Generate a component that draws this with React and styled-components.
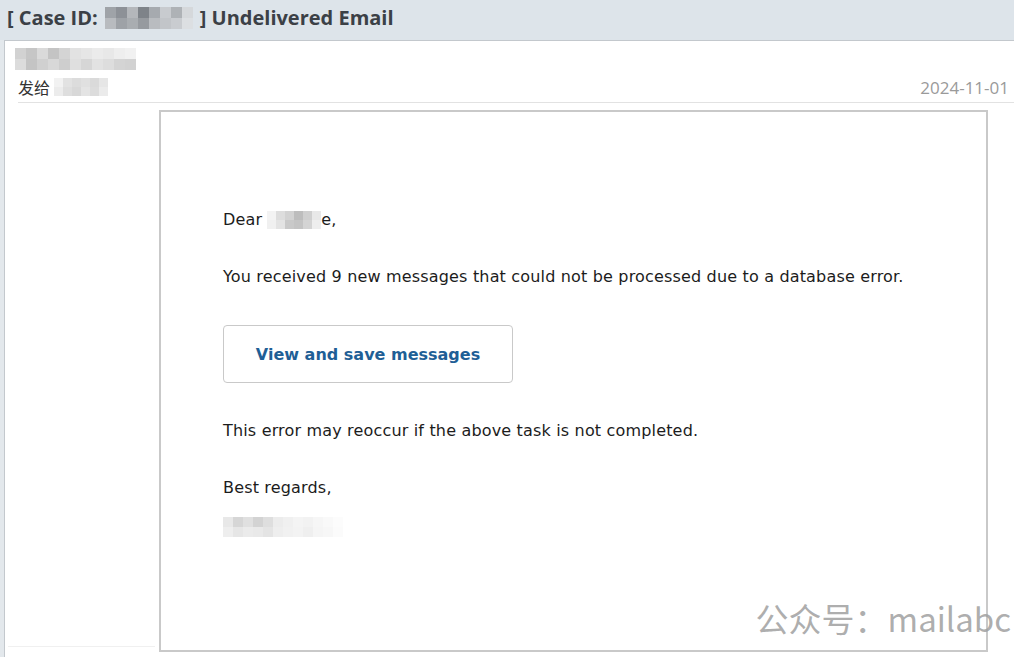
import styled, { createGlobalStyle } from 'styled-components';

const GlobalStyle = createGlobalStyle`
  html, body {
    margin: 0;
    padding: 0;
    background: #e3e8ec;
    overflow: hidden;
  }
`

// pixelated blur used where the screenshot had names masked
function Masked({ rows, cell = 12 }) {
  return (
    <MaskBox>
      {rows.map((row, r) =>
        <MaskRow key={r}>
          {row.map((c, i) => <MaskCell key={i} $size={cell} $color={c} />)}
        </MaskRow>
      )}
    </MaskBox>
  )
}

function App() {
  return (
    <Page>
      <GlobalStyle />
      <TitleBar>
        <Title>
          [ Case ID:
          <InlineMask>
            <Masked cell={11} rows={[
              ['#9fa3a8', '#8d9197', '#b4b7bb', '#7e8389', '#a6aaaf', '#c8cbcf', '#aeb2b6', '#d5d8db'],
              ['#b8bbbf', '#9ea2a7', '#a9adb1', '#969a9f', '#b9bcc0', '#c2c5c9', '#c9ccd0', '#dcdfe2'],
            ]} />
          </InlineMask>
          ] Undelivered Email
        </Title>
      </TitleBar>
      <Panel>
        <Meta>
          <SenderRow>
            <Masked cell={11} rows={[
              ['#d2d2d2', '#c6c6c6', '#dadada', '#c4c4c4', '#d4d4d4', '#e2e2e2', '#e6e6e6', '#ebebeb', '#e8e8e8', '#eeeeee', '#f1f1f1'],
              ['#dcdcdc', '#c4c4c4', '#d0d0d0', '#d8d8d8', '#cecece', '#dfdfdf', '#d6d6d6', '#e2e2e2', '#dddddd', '#d4d4d4', '#d2d2d2'],
            ]} />
          </SenderRow>
          <ToRow>
            <ToLabel>
              发给
              <Masked cell={9} rows={[
                ['#f2f2f2', '#e2e2e2', '#dcdcdc', '#e0e0e0', '#dadada', '#e6e6e6'],
                ['#ececec', '#dedede', '#d8d8d8', '#e4e4e4', '#dcdcdc', '#ebebeb'],
              ]} />
            </ToLabel>
            <DateText>2024-11-01</DateText>
          </ToRow>
        </Meta>
        <BodyArea>
          <Gutter />
          <MailFrame>
            <Line>
              Dear
              <Masked cell={9} rows={[
                ['#f3f3f3', '#dddddd', '#d2d2d2', '#bdbdbd', '#cfcfcf', '#e8e8e8'],
                ['#f0f0f0', '#e3e3e3', '#c9c9c9', '#c4c4c4', '#d4d4d4', '#eeeeee'],
              ]} />
              e,
            </Line>
            <Line>You received 9 new messages that could not be processed due to a database error.</Line>
            <ActionButton>View and save messages</ActionButton>
            <Line>This error may reoccur if the above task is not completed.</Line>
            <Line>Best regards,</Line>
            <Signature>
              <Masked cell={10} rows={[
                ['#e8e8e8', '#d6d6d6', '#e0e0e0', '#d3d3d3', '#dedede', '#ececec', '#f0f0f0', '#f4f4f4', '#f2f2f2', '#f6f6f6', '#f9f9f9', '#fcfcfc'],
                ['#eeeeee', '#e6e6e6', '#ebebeb', '#e9e9e9', '#e4e4e4', '#eeeeee', '#f1f1f1', '#f3f3f3', '#efefef', '#f5f5f5', '#f7f7f7', '#fbfbfb'],
              ]} />
            </Signature>
          </MailFrame>
        </BodyArea>
        <Watermark>公众号：mailabc</Watermark>
      </Panel>
    </Page>
  );
}

const Page = styled.div`
  width: 1014px;
  height: 657px;
  display: flex;
  flex-direction: column;
  overflow: hidden;
`
const TitleBar = styled.div`
  height: 40px;
  box-sizing: border-box;
  padding: 0 0 5px 7px;
  display: flex;
  align-items: center;
  background: #dde4ea;
`
const Title = styled.h1`
  margin: 0;
  display: flex;
  align-items: center;
  gap: 5px;
  font-family: "Open Sans", "Liberation Sans", sans-serif;
  font-weight: 700;
  font-size: 20px;
  color: #3b4046;
  white-space: nowrap;
`
const InlineMask = styled.span`
  display: inline-flex;
  margin: 0 2px;
`
const MaskBox = styled.span`
  display: inline-flex;
  flex-direction: column;
  filter: blur(0.6px);
  vertical-align: middle;
`
const MaskRow = styled.span`
  display: flex;
`
const MaskCell = styled.span`
  width: ${p => p.$size}px;
  height: ${p => p.$size}px;
  background: ${p => p.$color};
`
const Panel = styled.div`
  position: relative;
  flex: 1;
  margin-left: 4px;
  background: #fff;
  border-left: 1px solid #c3c8cd;
  border-top: 1px solid #c3c8cd;
  display: flex;
  flex-direction: column;
`
const Meta = styled.div`
  margin-left: 13px;
  border-bottom: 1px solid #e2e2e2;
`
const SenderRow = styled.div`
  height: 31px;
  display: flex;
  align-items: center;
  margin-left: -3px;
  padding-top: 4px;
  box-sizing: border-box;
`
const ToRow = styled.div`
  height: 30px;
  display: flex;
  align-items: center;
  justify-content: space-between;
  padding-right: 5px;
`
const ToLabel = styled.div`
  display: flex;
  align-items: center;
  gap: 4px;
  font-family: "Noto Sans CJK SC", sans-serif;
  font-size: 16px;
  color: #333;
`
const DateText = styled.div`
  font-family: "Open Sans", "Liberation Sans", sans-serif;
  font-size: 17px;
  color: #9a9a9a;
`
const BodyArea = styled.div`
  display: flex;
  margin-top: 7px;
`
const Gutter = styled.div`
  width: 147px;
  height: 536px;
  margin-left: 3px;
  border-bottom: 1px solid #f0f0f0;
`
const MailFrame = styled.div`
  width: 829px;
  height: 542px;
  margin-left: 4px;
  border: 2px solid #c9c9c9;
  padding: 99px 0 0 62px;
  box-sizing: border-box;
  display: flex;
  flex-direction: column;
  align-items: flex-start;
  gap: 39px;
  font-family: "DejaVu Sans", Verdana, sans-serif;
  font-size: 16px;
  letter-spacing: 0.17px;
  color: #1c1c1c;
`
const Line = styled.p`
  margin: 0;
  line-height: 18px;
  display: flex;
  align-items: center;
  white-space: nowrap;

  & > span {
    margin: 0 0 0 5px;
  }
`
const ActionButton = styled.a`
  width: 290px;
  height: 58px;
  box-sizing: border-box;
  border: 1px solid #c9c9c9;
  border-radius: 4px;
  display: flex;
  align-items: center;
  justify-content: center;
  font-weight: 700;
  font-size: 16px;
  letter-spacing: 0;
  color: #1f5f96;
  text-decoration: none;
`
const Signature = styled.div`
  margin-top: -20px;
`
const Watermark = styled.div`
  position: absolute;
  right: 3px;
  bottom: 15px;
  font-family: "Noto Sans CJK SC", sans-serif;
  font-size: 33px;
  color: rgba(160, 160, 160, 0.85);
  white-space: nowrap;
`

export default App;
